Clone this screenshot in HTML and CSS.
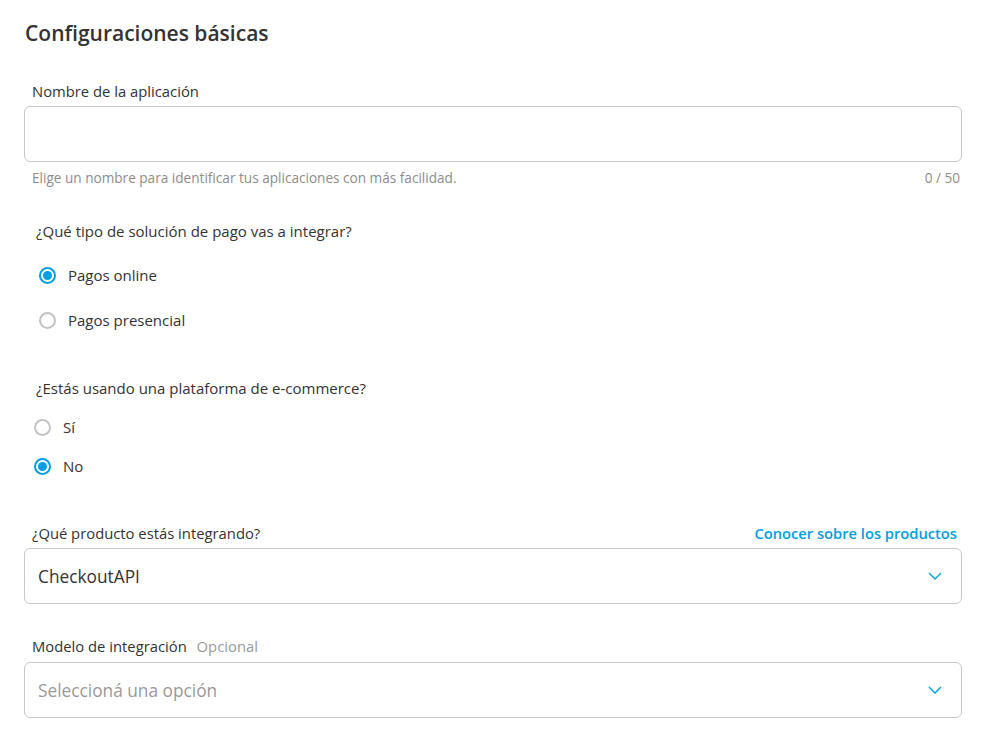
FILE: index.html
```html
<!DOCTYPE html>
<html lang="es">
<head>
    <meta charset="UTF-8">
    <title>Configuraciones básicas</title>
    <link rel="stylesheet" href="styles.css">
</head>
<body>
    <div class="settings">
        <h1 class="settings-title">Configuraciones básicas</h1>

        <div class="field field-name">
            <label class="field-label" for="appName">Nombre de la aplicación</label>
            <input class="text-input" id="appName" type="text" maxlength="50">
            <div class="field-help">
                <span>Elige un nombre para identificar tus aplicaciones con más facilidad.</span>
                <span>0 / 50</span>
            </div>
        </div>

        <div class="question question-payment">
            <p class="question-text">¿Qué tipo de solución de pago vas a integrar?</p>
            <label class="radio-row"><span class="radio checked"></span>Pagos online</label>
            <label class="radio-row"><span class="radio"></span>Pagos presencial</label>
        </div>

        <div class="question question-ecommerce">
            <p class="question-text">¿Estás usando una plataforma de e-commerce?</p>
            <label class="radio-row"><span class="radio"></span>Sí</label>
            <label class="radio-row"><span class="radio checked"></span>No</label>
        </div>

        <div class="field field-product">
            <div class="field-head">
                <span class="field-label">¿Qué producto estás integrando?</span>
                <a class="field-link" href="#">Conocer sobre los productos</a>
            </div>
            <div class="select-box">
                <span class="select-value">CheckoutAPI</span>
                <svg class="chevron" width="14" height="8" viewBox="0 0 14 8"><path d="M1 1l6 6 6-6" fill="none" stroke="#009ee3" stroke-width="1.4"/></svg>
            </div>
        </div>

        <div class="field field-model">
            <div class="field-head">
                <span class="field-label">Modelo de integración <span class="optional">Opcional</span></span>
            </div>
            <div class="select-box">
                <span class="select-value placeholder">Seleccioná una opción</span>
                <svg class="chevron" width="14" height="8" viewBox="0 0 14 8"><path d="M1 1l6 6 6-6" fill="none" stroke="#009ee3" stroke-width="1.4"/></svg>
            </div>
        </div>
    </div>
</body>
</html>
```

FILE: styles.css
```css
body {
    margin: 0;
    background-color: white;
    color: #333;
    font-family: 'Open Sans', sans-serif;
}
.settings {
    padding: 19px 28px 0 24px;
}
.settings-title {
    margin: 0 0 0 1px;
    font-size: 21px;
    font-weight: 600;
    color: #333;
    line-height: 28px;
}
.field-name {
    margin-top: 35px;
}
.field-label {
    display: block;
    margin: 0 0 6px 8px;
    font-size: 14.8px;
    line-height: 18px;
}
.text-input {
    display: block;
    box-sizing: border-box;
    width: 100%;
    height: 56px;
    border: 1px solid #c7c7c7;
    border-radius: 6px;
    padding: 0 14px;
    font: inherit;
}
.field-help {
    display: flex;
    justify-content: space-between;
    margin: 7px 2px 0 8px;
    font-size: 13.6px;
    line-height: 18px;
    color: #8c8c8c;
}
.question-text {
    margin: 0;
    font-size: 15px;
    line-height: 18px;
}
.question-payment {
    margin: 35px 0 0 12px;
}
.question-ecommerce {
    margin: 50px 0 0 12px;
}
.radio-row {
    display: flex;
    align-items: center;
    gap: 12px;
    font-size: 15px;
    line-height: 18px;
}
.question-payment .radio-row {
    margin-top: 26px;
    margin-left: 3px;
}
.question-payment .radio-row + .radio-row {
    margin-top: 27px;
}
.question-ecommerce .radio-row {
    margin-top: 21px;
    margin-left: -2px;
}
.question-ecommerce .radio-row + .radio-row {
    margin-top: 21px;
}
.radio {
    box-sizing: border-box;
    width: 17px;
    height: 17px;
    border: 2px solid #c3c3c3;
    border-radius: 50%;
    display: flex;
    align-items: center;
    justify-content: center;
}
.radio.checked {
    border-color: #009ee3;
}
.radio.checked::after {
    content: "";
    width: 9px;
    height: 9px;
    border-radius: 50%;
    background-color: #009ee3;
}
.field-product {
    margin-top: 49px;
}
.field-model {
    margin-top: 33px;
}
.field-head {
    display: flex;
    justify-content: space-between;
    align-items: baseline;
}
.field-head .field-label {
    margin-bottom: 6px;
}
.field-model .field-head .field-label {
    margin-bottom: 7px;
}
.field-link {
    margin-right: 5px;
    font-size: 14.7px;
    line-height: 18px;
    font-weight: 600;
    color: #009ee3;
    text-decoration: none;
}
.optional {
    margin-left: 6px;
    color: #999;
}
.select-box {
    display: flex;
    align-items: center;
    justify-content: space-between;
    box-sizing: border-box;
    height: 56px;
    border: 1px solid #c7c7c7;
    border-radius: 6px;
    padding: 0 19px 0 13px;
}
.select-value {
    font-size: 17.3px;
    color: #333;
}
.select-value.placeholder {
    color: #999;
}
```
